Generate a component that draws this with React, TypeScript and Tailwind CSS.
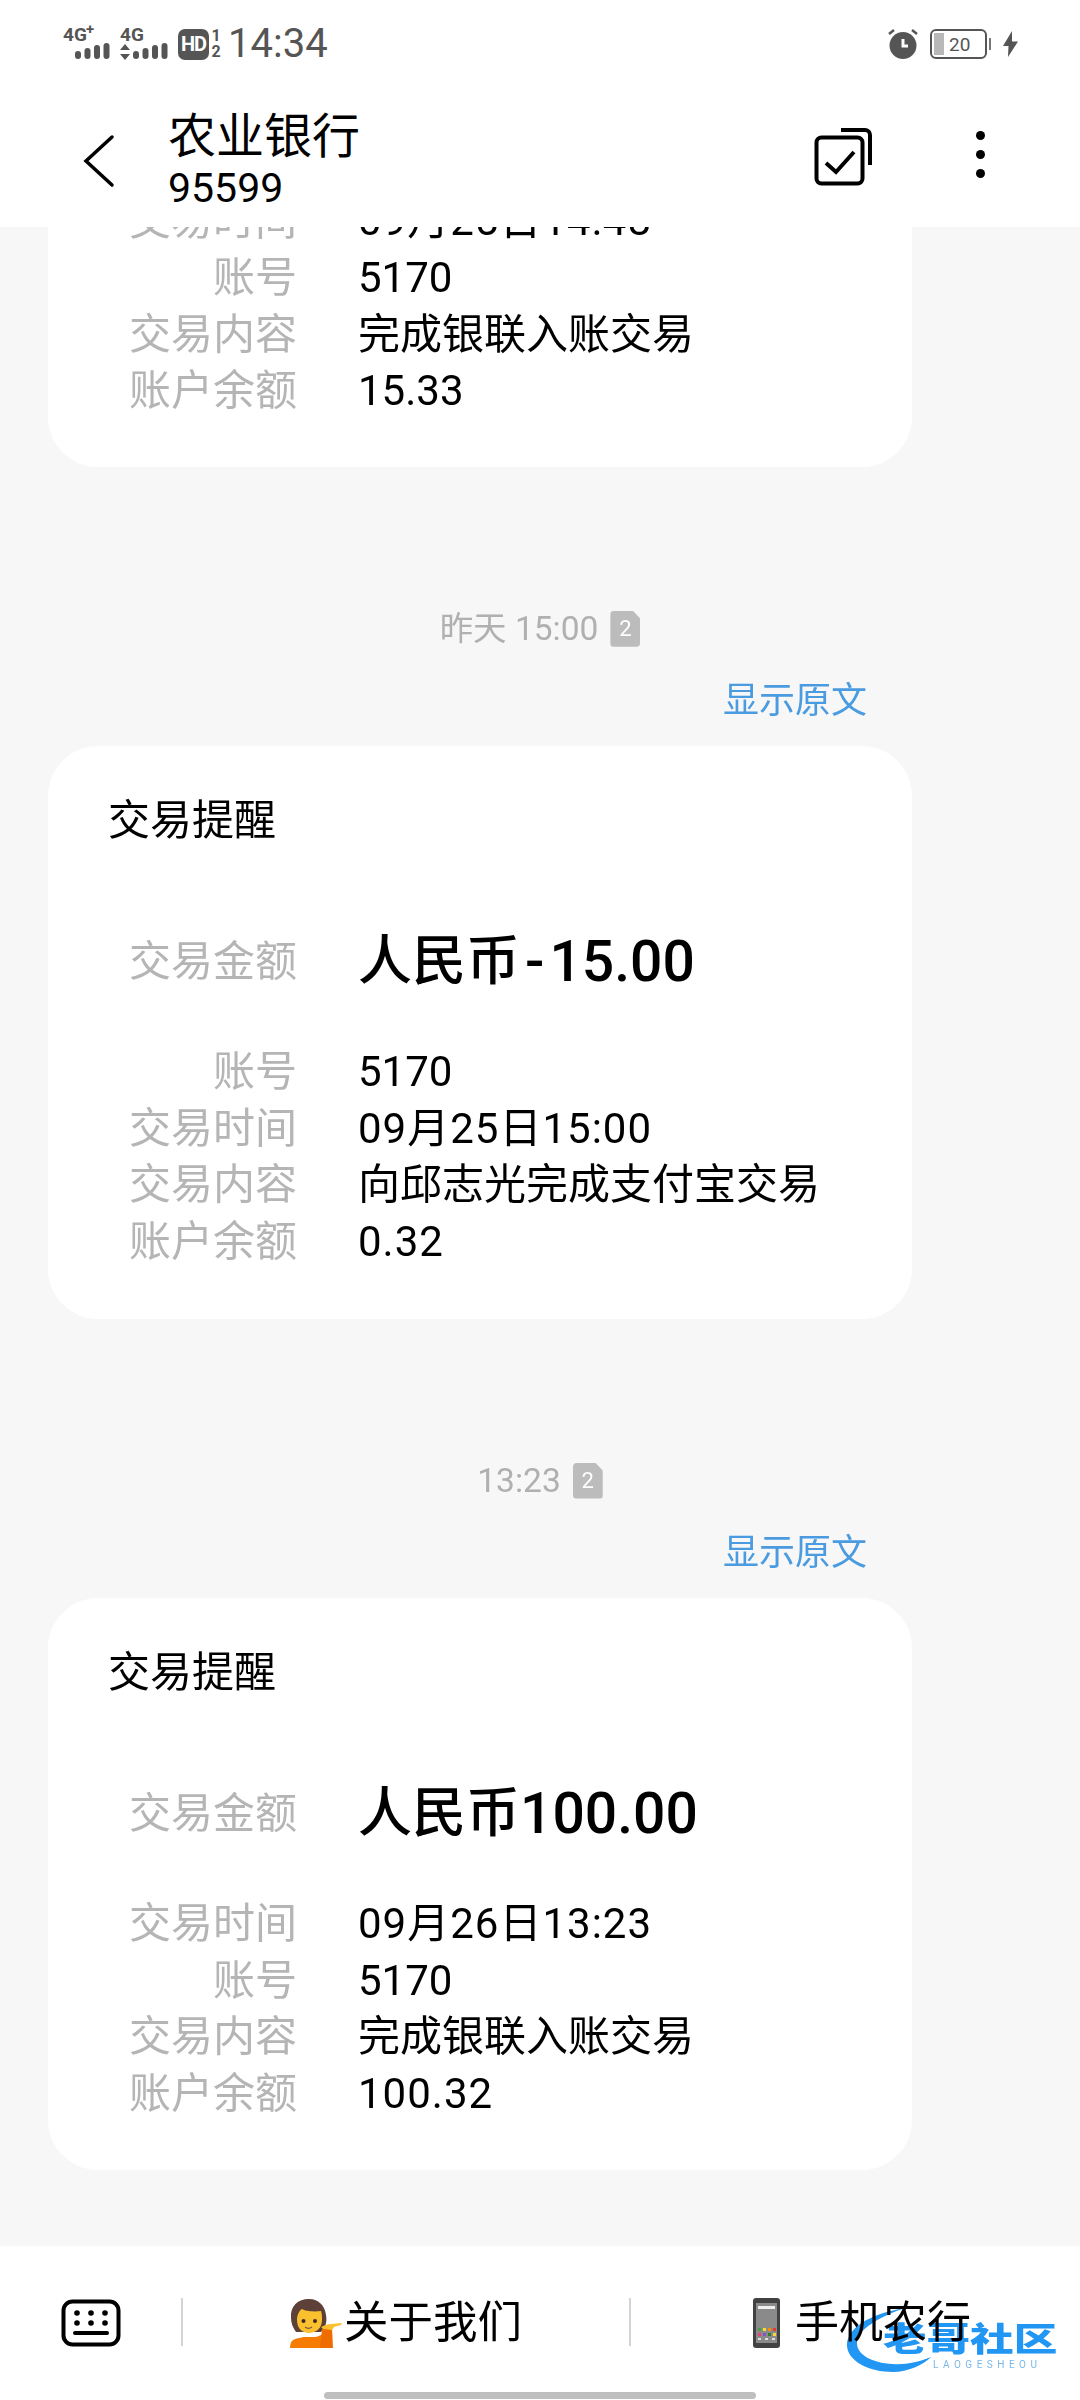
const FONT = "font-['Roboto','Noto_Sans_CJK_SC',sans-serif]";

type Row = { label: string; value: string; wide?: boolean };

function SignalBars({ x }: { x: number }) {
  // four rounded bars, growing left to right
  return (
    <g fill="#555">
      <rect x={x} y={9} width={6} height={8} rx={3} />
      <rect x={x + 9.500} y={6} width={6} height={11} rx={3} />
      <rect x={x + 19} y={3} width={6} height={14} rx={3} />
      <rect x={x + 28.500} y={1} width={6} height={16} rx={3} />
    </g>
  );
}

function StatusBar() {
  return (
    <div className="flex h-[88px] items-center justify-between pl-[63px] pr-[62px] text-[#555]">
      <div className="flex items-center">
        <div className="relative h-[36px] w-[48px]">
          <span className="absolute left-0 top-[-1px] text-[19px] font-bold leading-[19px]">4G</span>
          <span className="absolute left-[23px] top-[-4px] text-[15px] font-bold leading-[15px]">+</span>
          <svg className="absolute left-[12px] top-[16px]" width="36" height="20" viewBox="0 0 36 20">
            <SignalBars x={0} />
          </svg>
        </div>
        <div className="relative ml-[9px] h-[36px] w-[48px]">
          <span className="absolute left-0 top-[-1px] text-[19px] font-bold leading-[19px]">4G</span>
          <svg className="absolute left-0 top-[16px]" width="48" height="20" viewBox="0 0 48 20">
            <path d="M5 2l5 6H0zM5 18l5-6H0z" fill="#555" />
            <SignalBars x={13} />
          </svg>
        </div>
        <div className="ml-[10px] flex h-[31px] w-[31px] items-center justify-center rounded-[7px] bg-[#555] text-[20px] font-bold leading-none tracking-[-1px] text-white">
          HD
        </div>
        <div className="ml-[1px] flex w-[12px] flex-col items-center text-[16px] font-bold leading-[16px]">
          <span>1</span>
          <span>2</span>
        </div>
        <span className="ml-[6px] text-[40px] leading-none">14:34</span>
      </div>
      <div className="flex items-center">
        <svg width="30" height="30" viewBox="0 0 30 30">
          <circle cx="15" cy="16.500" r="13.500" fill="#555" />
          <path d="M15 10v7h5" fill="none" stroke="#fff" strokeWidth="3" />
          <path d="M1 5l5-4M29 5l-5-4" stroke="#555" strokeWidth="2.500" />
        </svg>
        <div className="relative ml-[12px] flex h-[30px] w-[57px] items-center rounded-[6px] border-[2px] border-[#555] p-[2px]">
          <div className="h-full w-[10px] bg-[#b8b8b8]" />
          <span className="ml-[5px] text-[19px] leading-none">20</span>
          <div className="absolute right-[-6px] top-[7px] h-[12px] w-[2px] bg-[#777]" />
        </div>
        <svg className="ml-[16px]" width="15" height="26" viewBox="0 0 15 26">
          <path d="M9 0L0 15h5.500L5 26l10-15.500H9z" fill="#555" />
        </svg>
      </div>
    </div>
  );
}

function Header() {
  return (
    <div className="relative flex h-[139px] items-start text-black">
      <svg className="ml-[82px] mt-[46px]" width="34" height="54" viewBox="0 0 34 54">
        <path d="M30 3L4 27l26 24" fill="none" stroke="#000" strokeWidth="3.500" strokeLinecap="round" />
      </svg>
      <div className="ml-[52px] mt-[19px] flex flex-col">
        <span className="text-[48px] leading-[60px]">农业银行</span>
        <span className="text-[41px] leading-[42px]">95599</span>
      </div>
      <svg className="absolute left-[814px] top-[39px]" width="60" height="60" viewBox="0 0 60 60">
        <rect x="2.500" y="10.500" width="46" height="46" rx="5" fill="none" stroke="#000" strokeWidth="4" />
        <path d="M27 3h24a5 5 0 0 1 5 5v30" fill="none" stroke="#000" strokeWidth="4" />
        <path d="M12 36l10 9 18-20" fill="none" stroke="#000" strokeWidth="4" />
      </svg>
      <div className="absolute left-[976px] top-[43px] flex flex-col gap-[10px]">
        <div className="h-[9px] w-[9px] rounded-full bg-black" />
        <div className="h-[9px] w-[9px] rounded-full bg-black" />
        <div className="h-[9px] w-[9px] rounded-full bg-black" />
      </div>
    </div>
  );
}

function InfoRows({ rows }: { rows: Row[] }) {
  return (
    <div className="flex flex-col">
      {rows.map((r) => (
        <div key={r.label} className="flex h-[56.700px] items-center">
          <span className="w-[249px] text-right text-[42px] leading-none text-[#b5b5b5]">{r.label}</span>
          <span className={r.wide ? "ml-[61px] text-[42px] leading-none tracking-[1px] text-black" : "ml-[61px] text-[42px] leading-none text-black"}>
            {r.value}
          </span>
        </div>
      ))}
    </div>
  );
}

function MessageCard({ sign, amount, rows }: { sign?: string; amount: string; rows: Row[] }) {
  return (
    <div className="ml-[48px] w-[864px] rounded-[50px] bg-white pb-[48px] pt-[47px]">
      <div className="pl-[60px] text-[42px] leading-[56px] text-black">交易提醒</div>
      <div className="mt-[73px] flex h-[80px] items-center">
        <span className="w-[249px] text-right text-[42px] leading-none text-[#b5b5b5]">交易金额</span>
        <span className="ml-[61px] flex items-center font-medium leading-none text-black">
          <span className="text-[54px]">人民币</span>
          {sign && <span className="px-[5px] text-[57px]">{sign}</span>}
          <span className="text-[57px]">{amount}</span>
        </span>
      </div>
      <div className="mt-[42px]">
        <InfoRows rows={rows} />
      </div>
    </div>
  );
}

function Stamp({ time }: { time: string }) {
  return (
    <div className="pt-[139px]">
      <div className="flex h-[46px] items-center justify-center gap-[12px] text-[33.500px] leading-none text-[#b0b0b0]">
        <span>{time}</span>
        <span className="flex h-[36px] w-[30px] items-center justify-center rounded-[4px] bg-[#bcbcbc] text-[22px] text-white [clip-path:polygon(0_0,75%_0,100%_22%,100%_100%,0_100%)]">
          2
        </span>
      </div>
      <div className="mt-[26px] flex h-[46px] items-center justify-end pr-[213px] text-[36px] leading-none text-[#4a9be0]">
        显示原文
      </div>
      <div className="h-[22px]" />
    </div>
  );
}

function PersonEmoji() {
  return (
    <svg width="52" height="50" viewBox="0 0 52 50">
      <path d="M1 20C0 8 8 1 19 1c10 0 16 7 17 16 1 6 0 11-3 14l-2 3H6C3 30 1 25 1 20z" fill="#5d4037" />
      <path d="M7 22c0-5 2-9 5-11 3 2 11 3 19 2 1 3 1 6 1 9 0 8-6 13-13 13S7 30 7 22z" fill="#fbc02d" />
      <circle cx="13.500" cy="23" r="2" fill="#3e2723" />
      <circle cx="25" cy="23" r="2" fill="#3e2723" />
      <path d="M15 29c2 1.500 5 1.500 7 0" fill="none" stroke="#795548" strokeWidth="1.300" />
      <path d="M0 50c0-3 1-6 2-7 3-3 8-3 12-4h12c3-1 5-2 7-3v14z" fill="#f57c00" />
      <path d="M32 31l10-1 1 20H30z" fill="#ef6c00" />
      <path d="M31 29c4-2 7-3 10-3l11-1-1 2-7 2-2 3-9-1z" fill="#fbc02d" />
    </svg>
  );
}

function PhoneEmoji() {
  return (
    <svg width="27" height="50" viewBox="0 0 27 50">
      <rect width="27" height="50" rx="3" fill="#424242" />
      <rect x="3" y="5" width="21" height="40" fill="#8a8a8a" />
      <rect x="5" y="8" width="17" height="3" fill="#eee" />
      <rect x="5" y="30" width="3" height="3" fill="#43a047" />
      <rect x="10" y="30" width="3" height="3" fill="#fdd835" />
      <rect x="15" y="30" width="3" height="3" fill="#fb8c00" />
      <rect x="20" y="30" width="3" height="3" fill="#e53935" />
      <rect x="5" y="35" width="3" height="3" fill="#ec407a" />
      <rect x="10" y="35" width="3" height="3" fill="#7e57c2" />
      <rect x="15" y="35" width="3" height="3" fill="#2e7d32" />
      <rect x="20" y="35" width="3" height="3" fill="#fdd835" />
      <rect x="5" y="40" width="3" height="2" fill="#ddd" />
      <rect x="12" y="40" width="3" height="2" fill="#ddd" />
      <rect x="19" y="40" width="3" height="2" fill="#ddd" />
    </svg>
  );
}

function BottomBar() {
  return (
    <div className="relative flex h-[154px] items-start bg-white text-black">
      <svg className="ml-[61px] mt-[53px]" width="60" height="48" viewBox="0 0 60 48">
        <rect x="2.500" y="2.500" width="55" height="43" rx="9" fill="none" stroke="#000" strokeWidth="4" />
        <g fill="#000">
          <circle cx="16" cy="14" r="2.800" />
          <circle cx="30" cy="14" r="2.800" />
          <circle cx="44" cy="14" r="2.800" />
          <circle cx="16" cy="24" r="2.800" />
          <circle cx="30" cy="24" r="2.800" />
          <circle cx="44" cy="24" r="2.800" />
        </g>
        <path d="M14 34h32" stroke="#000" strokeWidth="4" strokeLinecap="round" />
      </svg>
      <div className="ml-[60px] mt-[52px] h-[48px] w-[2px] bg-[#d4d4d4]" />
      <div className="ml-[107px] mt-[52px] flex h-[50px] items-center">
        <PersonEmoji />
        <span className="ml-[2px] text-[44.500px] leading-none">关于我们</span>
      </div>
      <div className="ml-[107px] mt-[52px] h-[48px] w-[2px] bg-[#d4d4d4]" />
      <div className="ml-[122px] mt-[52px] flex h-[50px] items-center">
        <PhoneEmoji />
        <span className="ml-[15px] text-[44px] leading-none">手机农行</span>
      </div>

      {/* forum watermark stamped over the corner */}
      <div className="absolute left-[843px] top-[53px] h-[76px] w-[237px] mix-blend-multiply blur-[0.5px]">
        <svg className="absolute left-0 top-0" width="110" height="76" viewBox="0 0 110 76">
          <path d="M62 9C25 15 4 30 4 46c0 16 22 27 46 27 15 0 30-7 38-15-12 5-26 8-38 7-22-1-37-10-36-22C15 31 35 18 62 9z" fill="#2196f3" />
        </svg>
        <span className="absolute left-[40px] top-[24px] origin-left scale-x-[1.320] whitespace-nowrap text-[33px] font-black leading-none text-[#2196f3]">
          老哥社区
        </span>
        <span className="absolute left-[90px] top-[61px] whitespace-nowrap text-[10px] leading-none tracking-[4.500px] text-[#7ab8e8]">
          LAOGESHEOU
        </span>
      </div>

      <div className="absolute bottom-[1px] left-[324px] h-[7px] w-[432px] rounded-full bg-[#bfbfbf]" />
    </div>
  );
}

export default function App() {
  return (
    <div className={`flex h-[2400px] w-[1080px] flex-col overflow-hidden bg-[#f7f7f7] ${FONT}`}>
      <div className="relative z-10 bg-white">
        <StatusBar />
        <Header />
      </div>
      <div className="min-h-0 flex-1 overflow-hidden">
        {/* older message scrolled partly under the header */}
        <div className="ml-[48px] mt-[-34px] w-[864px] rounded-b-[50px] bg-white pb-[47px]">
          <InfoRows
            rows={[
              { label: "交易时间", value: "09月25日14:48", wide: true },
              { label: "账号", value: "5170" },
              { label: "交易内容", value: "完成银联入账交易" },
              { label: "账户余额", value: "15.33" },
            ]}
          />
        </div>
        <Stamp time="昨天 15:00" />
        <MessageCard
          sign="-"
          amount="15.00"
          rows={[
            { label: "账号", value: "5170" },
            { label: "交易时间", value: "09月25日15:00", wide: true },
            { label: "交易内容", value: "向邱志光完成支付宝交易" },
            { label: "账户余额", value: "0.32", wide: true },
          ]}
        />
        <Stamp time="13:23" />
        <MessageCard
          amount="100.00"
          rows={[
            { label: "交易时间", value: "09月26日13:23", wide: true },
            { label: "账号", value: "5170" },
            { label: "交易内容", value: "完成银联入账交易" },
            { label: "账户余额", value: "100.32", wide: true },
          ]}
        />
      </div>
      <BottomBar />
    </div>
  );
}
